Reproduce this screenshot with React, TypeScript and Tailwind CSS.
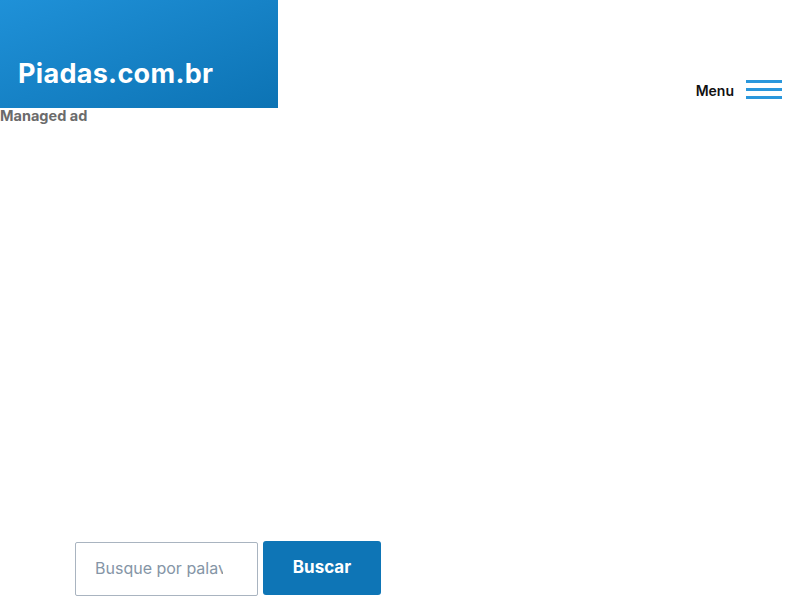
import React from "react";

export default function App() {
  return (
    <div className="w-[800px] h-[600px] bg-white relative overflow-hidden" style={{ fontFamily: "Inter, 'Open Sans', sans-serif" }}>
      <header className="flex items-start justify-between">
        <div className="w-[278px] h-[108px] bg-gradient-to-br from-[#1f91d8] to-[#0c73b4] flex items-end pl-[18px] pb-[21px]">
          <span className="text-white text-[27px] font-bold leading-none tracking-[0.3px]">Piadas.com.br</span>
        </div>
        <div className="flex items-center gap-[12px] mt-[80px] mr-[18px]">
          <span className="text-[14px] font-semibold text-[#111]">Menu</span>
          <div className="flex flex-col gap-[5px] w-[36px] -mt-[3px]">
            <div className="h-[3px] bg-[#2a97dc]" />
            <div className="h-[3px] bg-[#2a97dc]" />
            <div className="h-[3px] bg-[#2a97dc]" />
          </div>
        </div>
      </header>
      <div className="text-[14.5px] font-bold text-[#6b6b6b] leading-[16px]">Managed ad</div>
      <div className="h-[417px]" />
      <div className="flex items-start gap-[5px] pl-[75px]">
        <input
          className="w-[183px] h-[54px] mt-[1px] border border-[#a9b4c0] rounded-[2px] pl-[19px] pr-[34px] pb-[3px] text-[16px] text-[#333] placeholder-[#8595a6] outline-none"
          placeholder="Busque por palavra"
        />
        <button className="w-[118px] h-[54px] bg-[#0e75b6] rounded-[3px] text-white text-[17px] font-bold">
          Buscar
        </button>
      </div>
    </div>
  );
}
